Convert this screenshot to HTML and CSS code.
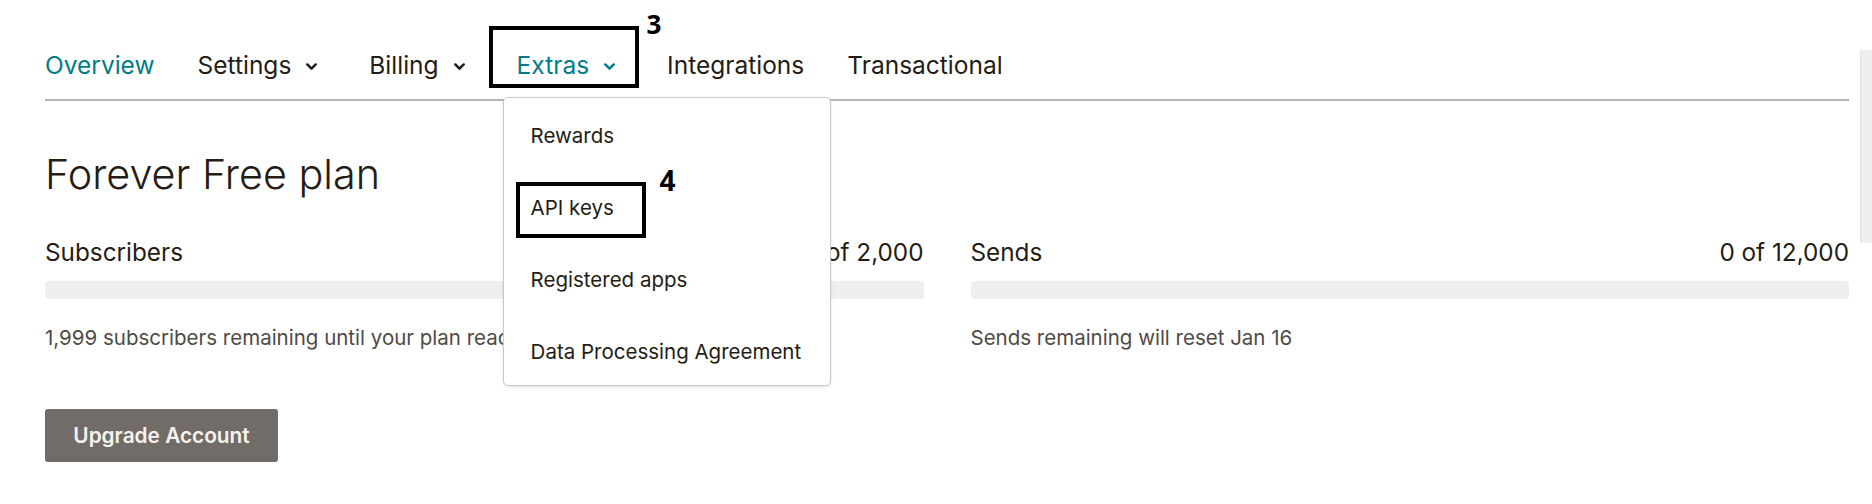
FILE: index.html
```html
<!DOCTYPE html>
<html lang="en">
<head>
<meta charset="utf-8">
<title>Account</title>
<link rel="stylesheet" href="styles.css">
</head>
<body>
<div class="page">
  <nav class="tabs">
    <a class="tab tab--active">Overview</a>
    <a class="tab tab--drop">Settings<svg class="chev" viewBox="0 0 10 7"><path d="M1.2 1.2 L5 5 L8.8 1.2"/></svg></a>
    <a class="tab tab--drop">Billing<svg class="chev" viewBox="0 0 10 7"><path d="M1.2 1.2 L5 5 L8.8 1.2"/></svg></a>
    <div class="tab tab--drop tab--active tab--open">Extras<svg class="chev" viewBox="0 0 10 7"><path d="M1.2 1.2 L5 5 L8.8 1.2"/></svg>
      <span class="mark mark--tab"></span><span class="mark-num mark-num--tab">3</span>
      <ul class="menu">
        <li class="menu-item">Rewards</li>
        <li class="menu-item">API keys<span class="mark mark--item"></span><span class="mark-num mark-num--item">4</span></li>
        <li class="menu-item">Registered apps</li>
        <li class="menu-item">Data Processing Agreement</li>
      </ul>
    </div>
    <a class="tab">Integrations</a>
    <a class="tab">Transactional</a>
  </nav>

  <h1 class="plan-title">Forever Free plan</h1>

  <div class="usage">
    <section class="meter">
      <div class="meter-head"><span>Subscribers</span><span>1 of 2,000</span></div>
      <div class="meter-bar"></div>
      <p class="meter-note">1,999 subscribers remaining until your plan reaches its limit</p>
    </section>
    <section class="meter">
      <div class="meter-head"><span>Sends</span><span>0 of 12,000</span></div>
      <div class="meter-bar"></div>
      <p class="meter-note">Sends remaining will reset Jan 16</p>
    </section>
  </div>

  <button class="upgrade">Upgrade Account</button>
</div>
<div class="scrollbar"></div>
</body>
</html>
```
FILE: styles.css
```css
* { box-sizing: border-box; }
html, body { margin: 0; background: #fff; }
body {
  font-family: "Inter", "Roboto", sans-serif;
  color: #241c15;
  overflow: hidden;
}
.page {
  padding: 0 23px 0 45px;
}
.tabs {
  display: flex;
  align-items: center;
  gap: 43px;
  padding: 50px 0 19px;
  border-bottom: 2px solid #b4b4b4;
}
.tab {
  position: relative;
  display: flex;
  align-items: center;
  font-size: 24.5px;
  line-height: 30px;
  color: #241c15;
  text-decoration: none;
  white-space: nowrap;
}
.tab--active { color: #007c89; }
.tab--drop { margin-right: 9px; }
.chev {
  width: 11px;
  height: 8px;
  margin-left: 15px;
  margin-top: 3px;
  fill: none;
  stroke: #241c15;
  stroke-width: 2.3;
  stroke-linecap: round;
  stroke-linejoin: round;
}
.tab--active .chev { stroke: #007c89; }

.mark {
  position: absolute;
  border: 4px solid #000;
  pointer-events: none;
}
.mark--tab { left: -28px; top: -24px; width: 150px; height: 62px; }
.mark-num {
  position: absolute;
  font-family: "Open Sans", "Liberation Sans", sans-serif;
  font-weight: 700;
  color: #000;
  line-height: 1;
}
.mark-num--tab { left: 130px; top: -39px; font-size: 26px; }

.menu {
  position: absolute;
  left: -14px;
  top: 47px;
  z-index: 5;
  width: 328px;
  margin: 0;
  padding: 2px 0 0;
  list-style: none;
  background: #fff;
  border: 1px solid #c9c9c9;
  border-radius: 5px;
  box-shadow: 0 1px 3px rgba(0,0,0,0.12);
  white-space: nowrap;
}
.menu-item {
  position: relative;
  height: 72px;
  line-height: 72px;
  padding-left: 27px;
  font-size: 20.5px;
  color: #241c15;
}
.menu-item:last-child { height: 69px; }
.mark--item { left: 12px; top: 10px; width: 130px; height: 56px; }
.mark-num--item { left: 156px; top: -6px; font-size: 28px; line-height: 1; }

.plan-title {
  margin: 49px 0 0;
  font-size: 41.3px;
  line-height: 48px;
  font-weight: 300;
  color: #241c15;
}
.usage {
  display: grid;
  grid-template-columns: 1fr 1fr;
  gap: 47px;
  margin-top: 40px;
}
.meter-head {
  display: flex;
  justify-content: space-between;
  font-size: 24.3px;
  line-height: 28px;
}
.meter-bar {
  height: 18px;
  margin-top: 15px;
  background: #efefef;
  border-radius: 3px;
}
.meter-note {
  margin: 27px 0 0;
  font-size: 20.5px;
  line-height: 24px;
  color: #4f4a46;
}
.upgrade {
  display: block;
  margin-top: 59px;
  width: 233px;
  height: 53px;
  border: 0;
  border-radius: 3px;
  background: #726c68;
  color: #f6f2ee;
  font-family: "Inter", "Roboto", sans-serif;
  font-size: 20.8px;
  font-weight: 600;
}
.scrollbar {
  position: fixed;
  right: 0;
  top: 50px;
  width: 12px;
  height: 193px;
  background: #efefed;
  border-left: 1px solid #e2e2e0;
}
```
